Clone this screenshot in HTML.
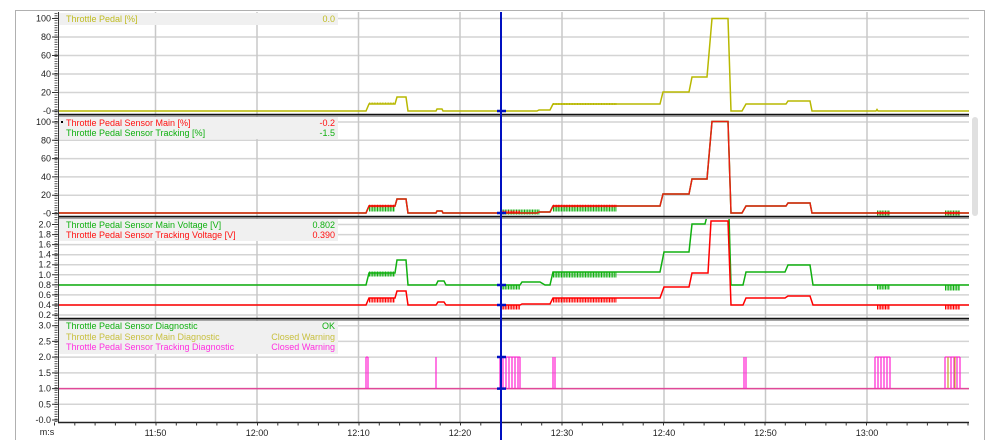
<!DOCTYPE html>
<html><head><meta charset="utf-8"><style>
html,body{margin:0;padding:0;background:#fff;width:996px;height:445px;overflow:hidden}
svg{display:block;font-family:"Liberation Sans",sans-serif;font-size:9px}
</style></head><body>
<svg width="996" height="445" viewBox="0 0 996 445" xmlns="http://www.w3.org/2000/svg">
<defs>
<clipPath id="c1"><rect x="58" y="12" width="911" height="102"/></clipPath>
<clipPath id="c2"><rect x="58" y="117" width="911" height="99"/></clipPath>
<clipPath id="c3"><rect x="58" y="219" width="911" height="99"/></clipPath>
<clipPath id="c4"><rect x="58" y="321" width="911" height="101"/></clipPath>
</defs>
<path d="M15.5,440 V10.5 H984.5 V440" fill="none" stroke="#b0b0b0"/>
<g stroke="#d4d4d4" stroke-width="1.5">
<path d="M58,18.5H969M58,37H969M58,55.5H969M58,74H969M58,92.5H969"/>
<path d="M58,122H969M58,140.3H969M58,158.6H969M58,176.9H969M58,195.2H969"/>
<path d="M58,224.5H969M58,234.6H969M58,244.6H969M58,254.7H969M58,264.7H969M58,274.8H969M58,284.9H969M58,294.9H969M58,305H969M58,315H969"/>
<path d="M58,325.7H969M58,341.4H969M58,357.1H969M58,372.9H969M58,388.6H969M58,404.3H969"/>
</g>
<g stroke="#c8c8c8" stroke-width="1.5">
<path d="M155.5,12V422M257,12V422M358.5,12V422M460,12V422M562,12V422M664,12V422M765.5,12V422M867,12V422"/>
</g>
<rect x="59" y="13" width="279" height="12" fill="#f0f0f0"/>
<rect x="59" y="117" width="279" height="22" fill="#f0f0f0"/>
<rect x="59" y="219" width="279" height="22" fill="#f0f0f0"/>
<rect x="59" y="321" width="279" height="33" fill="#f0f0f0"/>
<g>
<text x="66" y="22" fill="#c0bc20">Throttle Pedal [%]</text><text x="335" y="22" fill="#c0bc20" text-anchor="end">0.0</text>
<text x="66" y="126" fill="#ff1010">Throttle Pedal Sensor Main [%]</text><text x="335" y="126" fill="#ff1010" text-anchor="end">-0.2</text>
<text x="66" y="136" fill="#10b010">Throttle Pedal Sensor Tracking [%]</text><text x="335" y="136" fill="#10b010" text-anchor="end">-1.5</text>
<rect x="61" y="121" width="2" height="2" fill="#000"/>
<text x="66" y="228" fill="#10b010">Throttle Pedal Sensor Main Voltage [V]</text><text x="335" y="228" fill="#10b010" text-anchor="end">0.802</text>
<text x="66" y="238" fill="#ff1010">Throttle Pedal Sensor Tracking Voltage [V]</text><text x="335" y="238" fill="#ff1010" text-anchor="end">0.390</text>
<text x="66" y="329" fill="#10b010">Throttle Pedal Sensor Diagnostic</text><text x="335" y="329" fill="#10b010" text-anchor="end">OK</text>
<text x="66" y="340" fill="#c8c040">Throttle Pedal Sensor Main Diagnostic</text><text x="335" y="340" fill="#c8c040" text-anchor="end">Closed Warning</text>
<text x="66" y="350" fill="#ff30e0">Throttle Pedal Sensor Tracking Diagnostic</text><text x="335" y="350" fill="#ff30e0" text-anchor="end">Closed Warning</text>
</g>
<g clip-path="url(#c1)" fill="none">
<path d="M58,111 H366 L369,104 H395 L397,97 H406 L408,111 H436 L437,109 H442 L443,111 H537 L539,110 H550 L553,104 H617 L620,104 H660 L663,92 H689 L692,77 H707 L712,18.5 H728 L731,111 H742 L746,104 H763 H786 L788,101 H810 L812,111 H876 L877,109.5 L878,111 H969" stroke="#b8b800" stroke-width="1.5"/>
<path d="M369,103.5H395M553,104H617" stroke="#b8b800" stroke-width="2" stroke-dasharray="1 0.6"/>
</g>
<g clip-path="url(#c2)" fill="none">
<path d="M58,213 H366 L369,206 H395 L397,199 H406 L408,213 H436 L437,211 H442 L443,213 H537 L539,212 H550 L553,206 H617 L620,206 H660 L663,194 H689 L692,179 H707 L712,121.5 H728 L731,213 H742 L746,206 H763 H786 L788,203 H810 L812,213 H969" stroke="#10b010" stroke-width="1.5"/>
<path d="M369,209H395M553,209H617M500,212H540M877,213H890M945,213H960" stroke="#10b010" stroke-width="5" stroke-dasharray="1 0.6"/>
<path d="M58,213 H366 L369,206 H395 L397,199 H406 L408,213 H436 L437,211 H442 L443,213 H537 L539,212 H550 L553,206 H617 L620,206 H660 L663,194 H689 L692,179 H707 L712,121.5 H728 L731,213 H742 L746,206 H763 H786 L788,203 H810 L812,213 H969" stroke="#e82010" stroke-width="1.5"/>
<path d="M369,206H395M553,206H617M500,212H520M877,213H890M945,213H960" stroke="#ff0000" stroke-width="2.5" stroke-dasharray="1 0.6"/>
</g>
<g clip-path="url(#c3)" fill="none">
<path d="M58,285 H366 L369,273 H395 L397,260 H406 L408,285 H436 L438,281 H444 L446,285 H520 L522,282 H540 L545,285 H550 L553,272 H660 L664,252 H689 L692,224 H705 L707,216 H729 L731,285 H743 L746,272 H785 L788,265 H810 L813,285 H969" stroke="#10b010" stroke-width="1.5"/>
<path d="M369,274H395M553,275H617M500,287H520M877,287H890M945,288H960" stroke="#10b010" stroke-width="5" stroke-dasharray="1 0.6"/>
<path d="M58,305 H366 L369,298 H395 L397,291 H406 L408,305 H436 L438,302 H444 L446,305 H520 L522,304 H550 L553,298 H660 L664,287 H689 L692,273 H708 L711,221 H728 L731,305 H743 L746,298 H785 L788,296 H810 L813,305 H969" stroke="#ff0000" stroke-width="1.5"/>
<path d="M369,300H395M553,300H617M500,307H520M877,307H890M945,307H960" stroke="#ff0000" stroke-width="5" stroke-dasharray="1 0.6"/>
</g>
<g clip-path="url(#c4)" fill="none">
<path d="M58,388.6H969" stroke="#e04898" stroke-width="1.5"/>
<path d="M366,388.6V357M368,357V388.6M436,388.6V357M500,388.6V357M503,357V388.6M506,388.6V357M509,357V388.6M512,388.6V357M515,357V388.6M518,388.6V357M520,357V388.6M553,388.6V357M555,357V388.6M744,388.6V357M746,357V388.6M875,388.6V357M878,357V388.6M881,388.6V357M884,357V388.6M887,388.6V357M890,357V388.6M945,388.6V357M948,357V388.6M951,388.6V357M954,357V388.6M957,388.6V357M960,357V388.6" stroke="#ff20d0" stroke-width="1.2"/>
<path d="M366,357H368M500,357H520M875,357H890M945,357H960" stroke="#ff20d0" stroke-width="1"/>
<path d="M948,388V357M955,388V357" stroke="#b8b800" stroke-width="1"/>
</g>
<g stroke="#111" stroke-width="1.5">
<path d="M58,114.5H969M58,216.5H969M58,318.5H969"/>
</g>
<g stroke="#888" stroke-width="1.5">
<path d="M58,116H969M58,218H969M58,320H969"/>
</g>
<path d="M58.5,12V422" stroke="#333" stroke-width="1"/>
<path d="M56,13V422" stroke="#333" stroke-width="3" stroke-dasharray="0.8 1.6"/>
<g stroke="#333" stroke-width="1">
<path d="M52,18.5H58M52,37H58M52,55.5H58M52,74H58M52,92.5H58M52,111H58"/>
<path d="M52,122H58M52,140.3H58M52,158.6H58M52,176.9H58M52,195.2H58M52,213.5H58"/>
<path d="M52,224.5H58M52,234.6H58M52,244.6H58M52,254.7H58M52,264.7H58M52,274.8H58M52,284.9H58M52,294.9H58M52,305H58M52,315H58"/>
<path d="M52,325.7H58M52,341.4H58M52,357.1H58M52,372.9H58M52,388.6H58M52,404.3H58M52,420H58"/>
</g>
<g fill="#222" text-anchor="end">
<text x="51" y="21.5">100</text><text x="51" y="40">80</text><text x="51" y="58.5">60</text><text x="51" y="77">40</text><text x="51" y="95.5">20</text><text x="51" y="114">-0</text>
<text x="51" y="125">100</text><text x="51" y="143.3">80</text><text x="51" y="161.6">60</text><text x="51" y="179.9">40</text><text x="51" y="198.2">20</text><text x="51" y="216.5">-0</text>
<text x="51" y="227.5">2.0</text><text x="51" y="237.6">1.8</text><text x="51" y="247.6">1.6</text><text x="51" y="257.7">1.4</text><text x="51" y="267.7">1.2</text><text x="51" y="277.8">1.0</text><text x="51" y="287.9">0.8</text><text x="51" y="297.9">0.6</text><text x="51" y="308">0.4</text><text x="51" y="318">0.2</text>
<text x="51" y="328.7">3.0</text><text x="51" y="344.4">2.5</text><text x="51" y="360.1">2.0</text><text x="51" y="375.9">1.5</text><text x="51" y="391.6">1.0</text><text x="51" y="407.3">0.5</text><text x="51" y="423">-0.0</text>
</g>
<path d="M58,422.5H969" stroke="#222" stroke-width="1.5"/>
<path d="M54,424H969" stroke="#333" stroke-width="3" stroke-dasharray="1 19.3"/>
<g fill="#222" text-anchor="middle">
<text x="47" y="435">m:s</text>
<text x="155.5" y="436">11:50</text><text x="257" y="436">12:00</text><text x="358.5" y="436">12:10</text><text x="460" y="436">12:20</text><text x="562" y="436">12:30</text><text x="664" y="436">12:40</text><text x="765.5" y="436">12:50</text><text x="867" y="436">13:00</text>
</g>
<path d="M501,12V440" stroke="#0010c0" stroke-width="2"/>
<g stroke="#0010c0" stroke-width="2.5">
<path d="M497,111H506M497,213H506M497,285H506M497,305H506M497,357H506M497,388.6H506"/>
</g>
<rect x="972" y="117" width="6" height="99" rx="3" fill="#e0e0e0"/>
</svg>
</body></html>
